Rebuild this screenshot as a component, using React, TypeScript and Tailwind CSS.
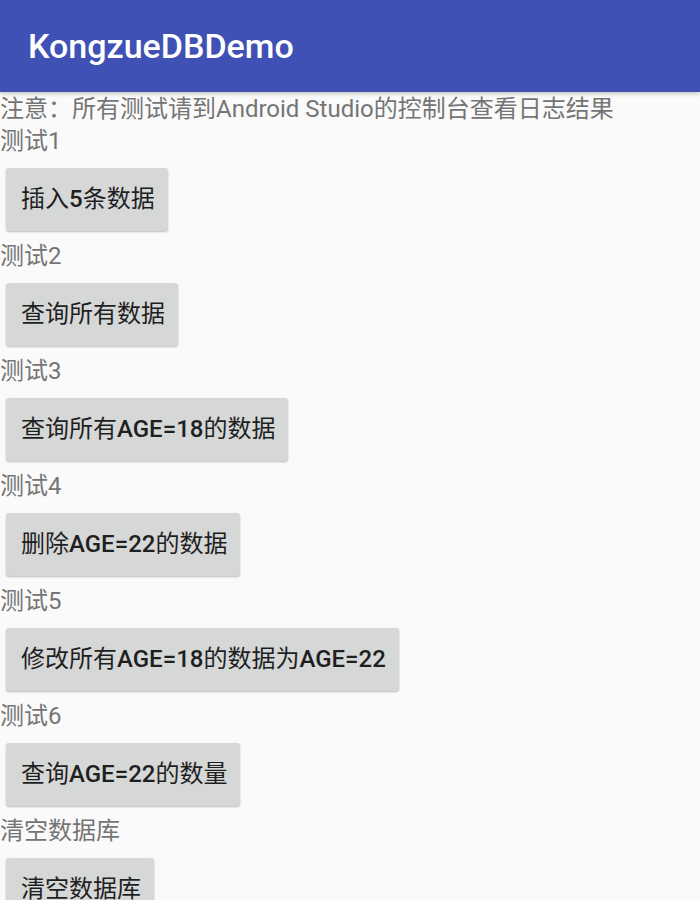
import React from "react";

const FONT = { fontFamily: 'Roboto, "Noto Sans CJK SC", sans-serif' };

function Btn({ children }: { children: React.ReactNode }) {
  return (
    <div className="h-[84px] px-[6px] py-[10.5px] flex">
      <div className="h-[63px] inline-flex items-center pl-[15px] pr-[13px] bg-[#d6d7d7] rounded-[3px] shadow-[0_1px_2px_rgba(0,0,0,0.25)] text-[24px] text-[#1f1f1f] whitespace-nowrap">
        {children}
      </div>
    </div>
  );
}

function Label({ children }: { children: React.ReactNode }) {
  return (
    <div className="h-[31px] leading-[31px] text-[24px] text-[#757575] whitespace-nowrap">
      {children}
    </div>
  );
}

const M = ({ children }: { children: React.ReactNode }) => (
  <span className="font-medium">{children}</span>
);

export default function App() {
  return (
    <div className="w-[700px] h-[900px] bg-[#fafafa] overflow-hidden" style={FONT}>
      <div className="relative z-10 h-[92px] bg-[#3f51b5] flex items-center pl-[28px] text-white text-[34px] font-medium shadow-[0_2px_4px_rgba(0,0,0,0.2)]">
        KongzueDBDemo
      </div>
      <div className="h-[34px] leading-[34px] text-[24px] text-[#757575] whitespace-nowrap">
        注意：所有测试请到Android Studio的控制台查看日志结果
      </div>
      <Label>测试1</Label>
      <Btn>
        插入<M>5</M>条数据
      </Btn>
      <Label>测试2</Label>
      <Btn>查询所有数据</Btn>
      <Label>测试3</Label>
      <Btn>
        查询所有<M>AGE=18</M>的数据
      </Btn>
      <Label>测试4</Label>
      <Btn>
        删除<M>AGE=22</M>的数据
      </Btn>
      <Label>测试5</Label>
      <Btn>
        修改所有<M>AGE=18</M>的数据为<M>AGE=22</M>
      </Btn>
      <Label>测试6</Label>
      <Btn>
        查询<M>AGE=22</M>的数量
      </Btn>
      <Label>清空数据库</Label>
      <Btn>清空数据库</Btn>
    </div>
  );
}
